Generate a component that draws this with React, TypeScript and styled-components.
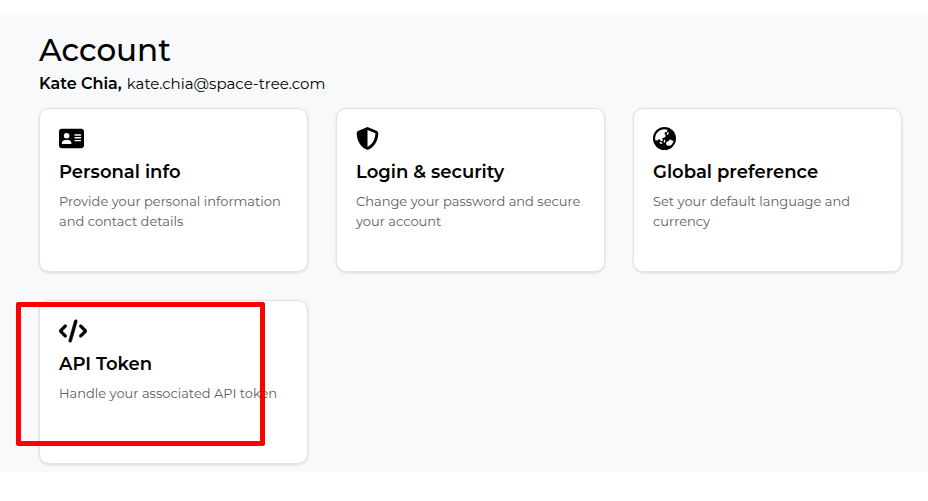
import React from "react";
import type { IconType } from "react-icons";
import { FaAddressCard, FaCode, FaEarthAsia, FaShieldHalved } from "react-icons/fa6";
import styled, { createGlobalStyle } from "styled-components";

const GlobalStyle = createGlobalStyle`
  *, *::before, *::after { box-sizing: border-box; }
  body {
    margin: 0;
    background: #ffffff;
    color: #000000;
    font-family: Montserrat, Inter, "Open Sans", sans-serif;
  }
`;

const Page = styled.main`
  margin-top: 13px;
  padding: 21px 26px 8px 39px;
  background: #f8f9fb;
`;

const Heading = styled.h1`
  margin: 0;
  font-size: 31px;
  line-height: 32px;
  font-weight: 500;
`;

const Identity = styled.p`
  display: flex;
  flex-wrap: wrap;
  align-items: baseline;
  column-gap: 5px;
  margin: 8px 0 14px;
  font-size: 15px;
  line-height: 20px;
`;

const Name = styled.strong`
  font-size: 16px;
  font-weight: 600;
`;

const CardGrid = styled.div`
  display: grid;
  grid-template-columns: repeat(3, minmax(0, 1fr));
  gap: 28px;
`;

const Card = styled.a`
  position: relative;
  display: flex;
  flex-direction: column;
  min-height: 164px;
  padding: 17px 19px;
  border: 1px solid #e1e3e5;
  border-radius: 10px;
  background: #ffffff;
  box-shadow: 0 1px 3px rgba(0, 0, 0, 0.12);
  color: inherit;
  text-decoration: none;
`;

const CardIcon = styled.span<{ $size: number; $outline: number }>`
  display: flex;
  align-items: center;
  height: 25px;
  font-size: ${({ $size }) => $size}px;

  svg {
    stroke-width: ${({ $outline }) => $outline};
  }
`;

const CardTitle = styled.h2`
  margin: 9px 0 7px;
  font-size: 18px;
  line-height: 24px;
  font-weight: 600;
`;

const CardText = styled.p`
  margin: 0;
  font-size: 13px;
  line-height: 20px;
  color: #606060;
`;

const Highlight = styled.span`
  position: absolute;
  top: 1px;
  left: -24px;
  width: 249px;
  height: 144px;
  border: 5px solid #ff0000;
  border-radius: 2px;
  pointer-events: none;
`;

interface Section {
  title: string;
  text: string;
  href: string;
  icon: IconType;
  iconSize: number;
  iconOutline?: number;
  highlighted?: boolean;
}

const sections: Section[] = [
  {
    title: "Personal info",
    text: "Provide your personal information and contact details",
    href: "#personal-info",
    icon: FaAddressCard,
    iconSize: 25,
  },
  {
    title: "Login & security",
    text: "Change your password and secure your account",
    href: "#security",
    icon: FaShieldHalved,
    iconSize: 23,
  },
  {
    title: "Global preference",
    text: "Set your default language and currency",
    href: "#preference",
    icon: FaEarthAsia,
    iconSize: 23,
  },
  {
    title: "API Token",
    text: "Handle your associated API token",
    href: "#api-token",
    icon: FaCode,
    iconSize: 28,
    iconOutline: 14,
    highlighted: true,
  },
];

export default function App() {
  return (
    <>
      <GlobalStyle />
      <Page>
        <Heading>Account</Heading>
        <Identity>
          <Name>Kate Chia,</Name>
          <span>kate.chia@space-tree.com</span>
        </Identity>
        <CardGrid>
          {sections.map(({ title, text, href, icon: Icon, iconSize, iconOutline = 0, highlighted }) => (
            <Card key={title} href={href}>
              <CardIcon $size={iconSize} $outline={iconOutline}>
                <Icon aria-hidden />
              </CardIcon>
              <CardTitle>{title}</CardTitle>
              <CardText>{text}</CardText>
              {highlighted && <Highlight />}
            </Card>
          ))}
        </CardGrid>
      </Page>
    </>
  );
}
